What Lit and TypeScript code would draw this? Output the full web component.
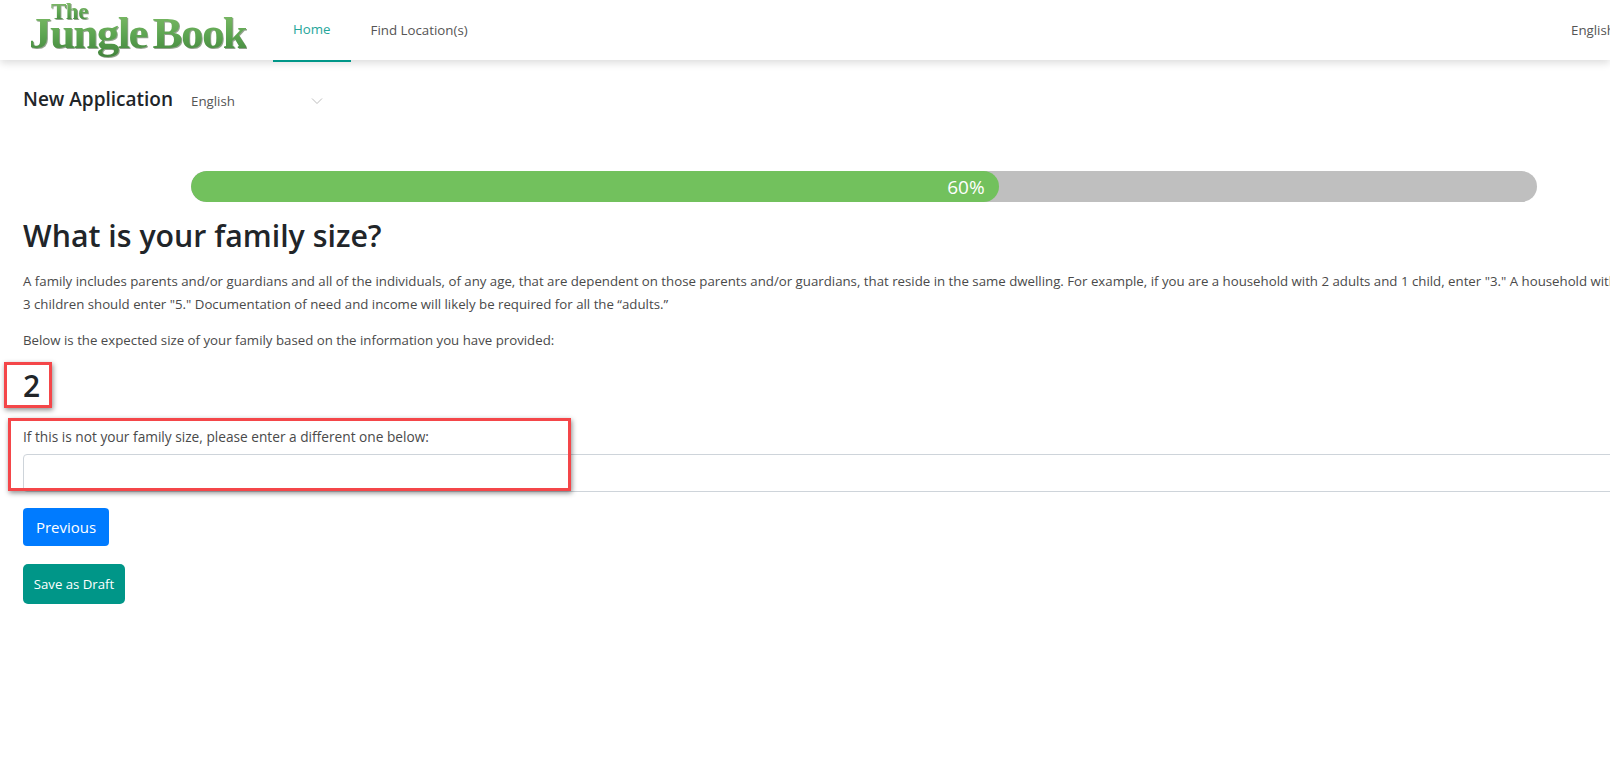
import { LitElement, html, css } from "lit";
import { customElement } from "lit/decorators.js";

@customElement("app-root")
export class AppRoot extends LitElement {
  static styles = css`
    :host {
      display: block;
      position: relative;
      width: 1610px;
      height: 774px;
      overflow: hidden;
      background: #fff;
      font-family: "Open Sans", "Noto Sans", sans-serif;
      color: #212529;
    }
    header {
      height: 60px;
      display: flex;
      align-items: stretch;
      background: #fff;
      box-shadow: 0 3px 8px rgba(0, 0, 0, 0.14);
      position: relative;
    }
    .logo {
      width: 273px;
      flex: none;
      position: relative;
      font-family: "Liberation Serif", serif;
      font-weight: 700;
    }
    .logo span {
      position: absolute;
      background: linear-gradient(180deg, #86c06c 0%, #5ba450 55%, #3f7f3a 100%);
      -webkit-background-clip: text;
      background-clip: text;
      color: transparent;
      filter: drop-shadow(1px 1px 0 rgba(40, 70, 30, 0.5));
      white-space: nowrap;
    }
    .the {
      left: 51px;
      top: 0;
      font-size: 23px;
      line-height: 24px;
      letter-spacing: -0.5px;
    }
    .jb {
      left: 29px;
      top: 6px;
      font-size: 45px;
      line-height: 54px;
      letter-spacing: -1.6px;
      word-spacing: -4px;
    }
    nav {
      display: flex;
    }
    nav a {
      display: flex;
      align-items: center;
      padding: 0 20px;
      font-size: 13.3px;
      color: #555;
      height: 60px;
      box-sizing: border-box;
    }
    nav a.active {
      color: #26a69a;
      border-bottom: 2px solid #009688;
      height: 62px;
      padding-bottom: 2px;
    }
    .lang {
      position: absolute;
      left: 1571px;
      top: 21px;
      font-size: 13.3px;
      color: #555;
      white-space: nowrap;
    }
    main {
      width: 1720px;
      padding: 0 0 0 23px;
      box-sizing: border-box;
    }
    .title-row {
      display: flex;
      align-items: center;
      height: 24px;
      margin-top: 27px;
    }
    .title-row h2 {
      margin: 0;
      width: 151px;
      flex: none;
      font-size: 19px;
      font-weight: 600;
      white-space: nowrap;
    }
    .select {
      margin-left: 17px;
      width: 132px;
      display: flex;
      justify-content: space-between;
      align-items: center;
      font-size: 13.3px;
      color: #555;
      padding-top: 4px;
    }
    .select svg {
      display: block;
    }
    .progress {
      width: 1346px;
      height: 31px;
      margin: 60px 0 0 168px;
      border-radius: 16px;
      background: #bfbfbf;
      overflow: hidden;
    }
    .bar {
      height: 100%;
      border-radius: 16px;
      background: #72c15d;
      color: #fff;
      font-size: 19px;
      line-height: 33px;
      text-align: right;
      padding-right: 14px;
      box-sizing: border-box;
    }
    h1 {
      margin: 14px 0 0;
      font-size: 30.3px;
      line-height: 40px;
      font-weight: 600;
    }
    p {
      margin: 0;
      font-size: 13.25px;
      line-height: 23px;
      color: #4a4a4a;
      white-space: nowrap;
    }
    .intro {
      margin-top: 14px;
    }
    .below {
      margin-top: 13px;
    }
    .size {
      font-size: 30px;
      line-height: 40px;
      font-weight: 600;
      margin-top: 14px;
    }
    .field-label {
      margin-top: 22px;
      display: block;
      font-size: 13.7px;
      line-height: 18px;
      color: #4a4a4a;
    }
    .input {
      display: block;
      width: 100%;
      height: 38px;
      margin-top: 8px;
      box-sizing: border-box;
      border: 1px solid #ced4da;
      border-radius: 4px;
      background: #fff;
      padding: 0;
    }
    .btn {
      display: block;
      border: 0;
      color: #fff;
      font-family: inherit;
      border-radius: 4px;
    }
    .prev {
      margin-top: 16px;
      width: 86px;
      height: 38px;
      background: #007bff;
      font-size: 15px;
    }
    .draft {
      margin-top: 18px;
      width: 102px;
      height: 40px;
      background: #009688;
      font-size: 13.2px;
      border-radius: 5px;
    }
    .mark {
      position: absolute;
      box-sizing: border-box;
      border: 3px solid #f44649;
      box-shadow: 1px 2px 5px rgba(0, 0, 0, 0.45);
      pointer-events: none;
    }
    .m1 {
      left: 4px;
      top: 362px;
      width: 48px;
      height: 46px;
    }
    .m2 {
      left: 8px;
      top: 418px;
      width: 563px;
      height: 73px;
    }
  `;

  render() {
    return html`
      <header>
        <div class="logo">
          <span class="the">The</span>
          <span class="jb">Jungle Book</span>
        </div>
        <nav>
          <a class="active">Home</a>
          <a>Find Location(s)</a>
        </nav>
        <div class="lang">English</div>
      </header>
      <main>
        <div class="title-row">
          <h2>New Application</h2>
          <div class="select">
            <span>English</span>
            <svg width="12" height="8" viewBox="0 0 12 8" fill="none" stroke="#bdbdbd" stroke-width="1">
              <path d="M1 1.5 6 6.5 11 1.5" />
            </svg>
          </div>
        </div>
        <div class="progress"><div class="bar" style="width: 60%">60%</div></div>
        <h1>What is your family size?</h1>
        <p class="intro">
          A family includes parents and/or guardians and all of the individuals, of any age, that are dependent on those parents and/or guardians, that reside in the same dwelling. For example, if you are a household with 2 adults and 1 child, enter "3." A household with 2 adults and<br />3 children should enter "5." Documentation of need and income will likely be required for all the “adults.”
        </p>
        <p class="below">Below is the expected size of your family based on the information you have provided:</p>
        <div class="size">2</div>
        <label class="field-label">If this is not your family size, please enter a different one below:</label>
        <input class="input" type="text" />
        <button class="btn prev">Previous</button>
        <button class="btn draft">Save as Draft</button>
      </main>
      <div class="mark m1"></div>
      <div class="mark m2"></div>
    `;
  }
}
